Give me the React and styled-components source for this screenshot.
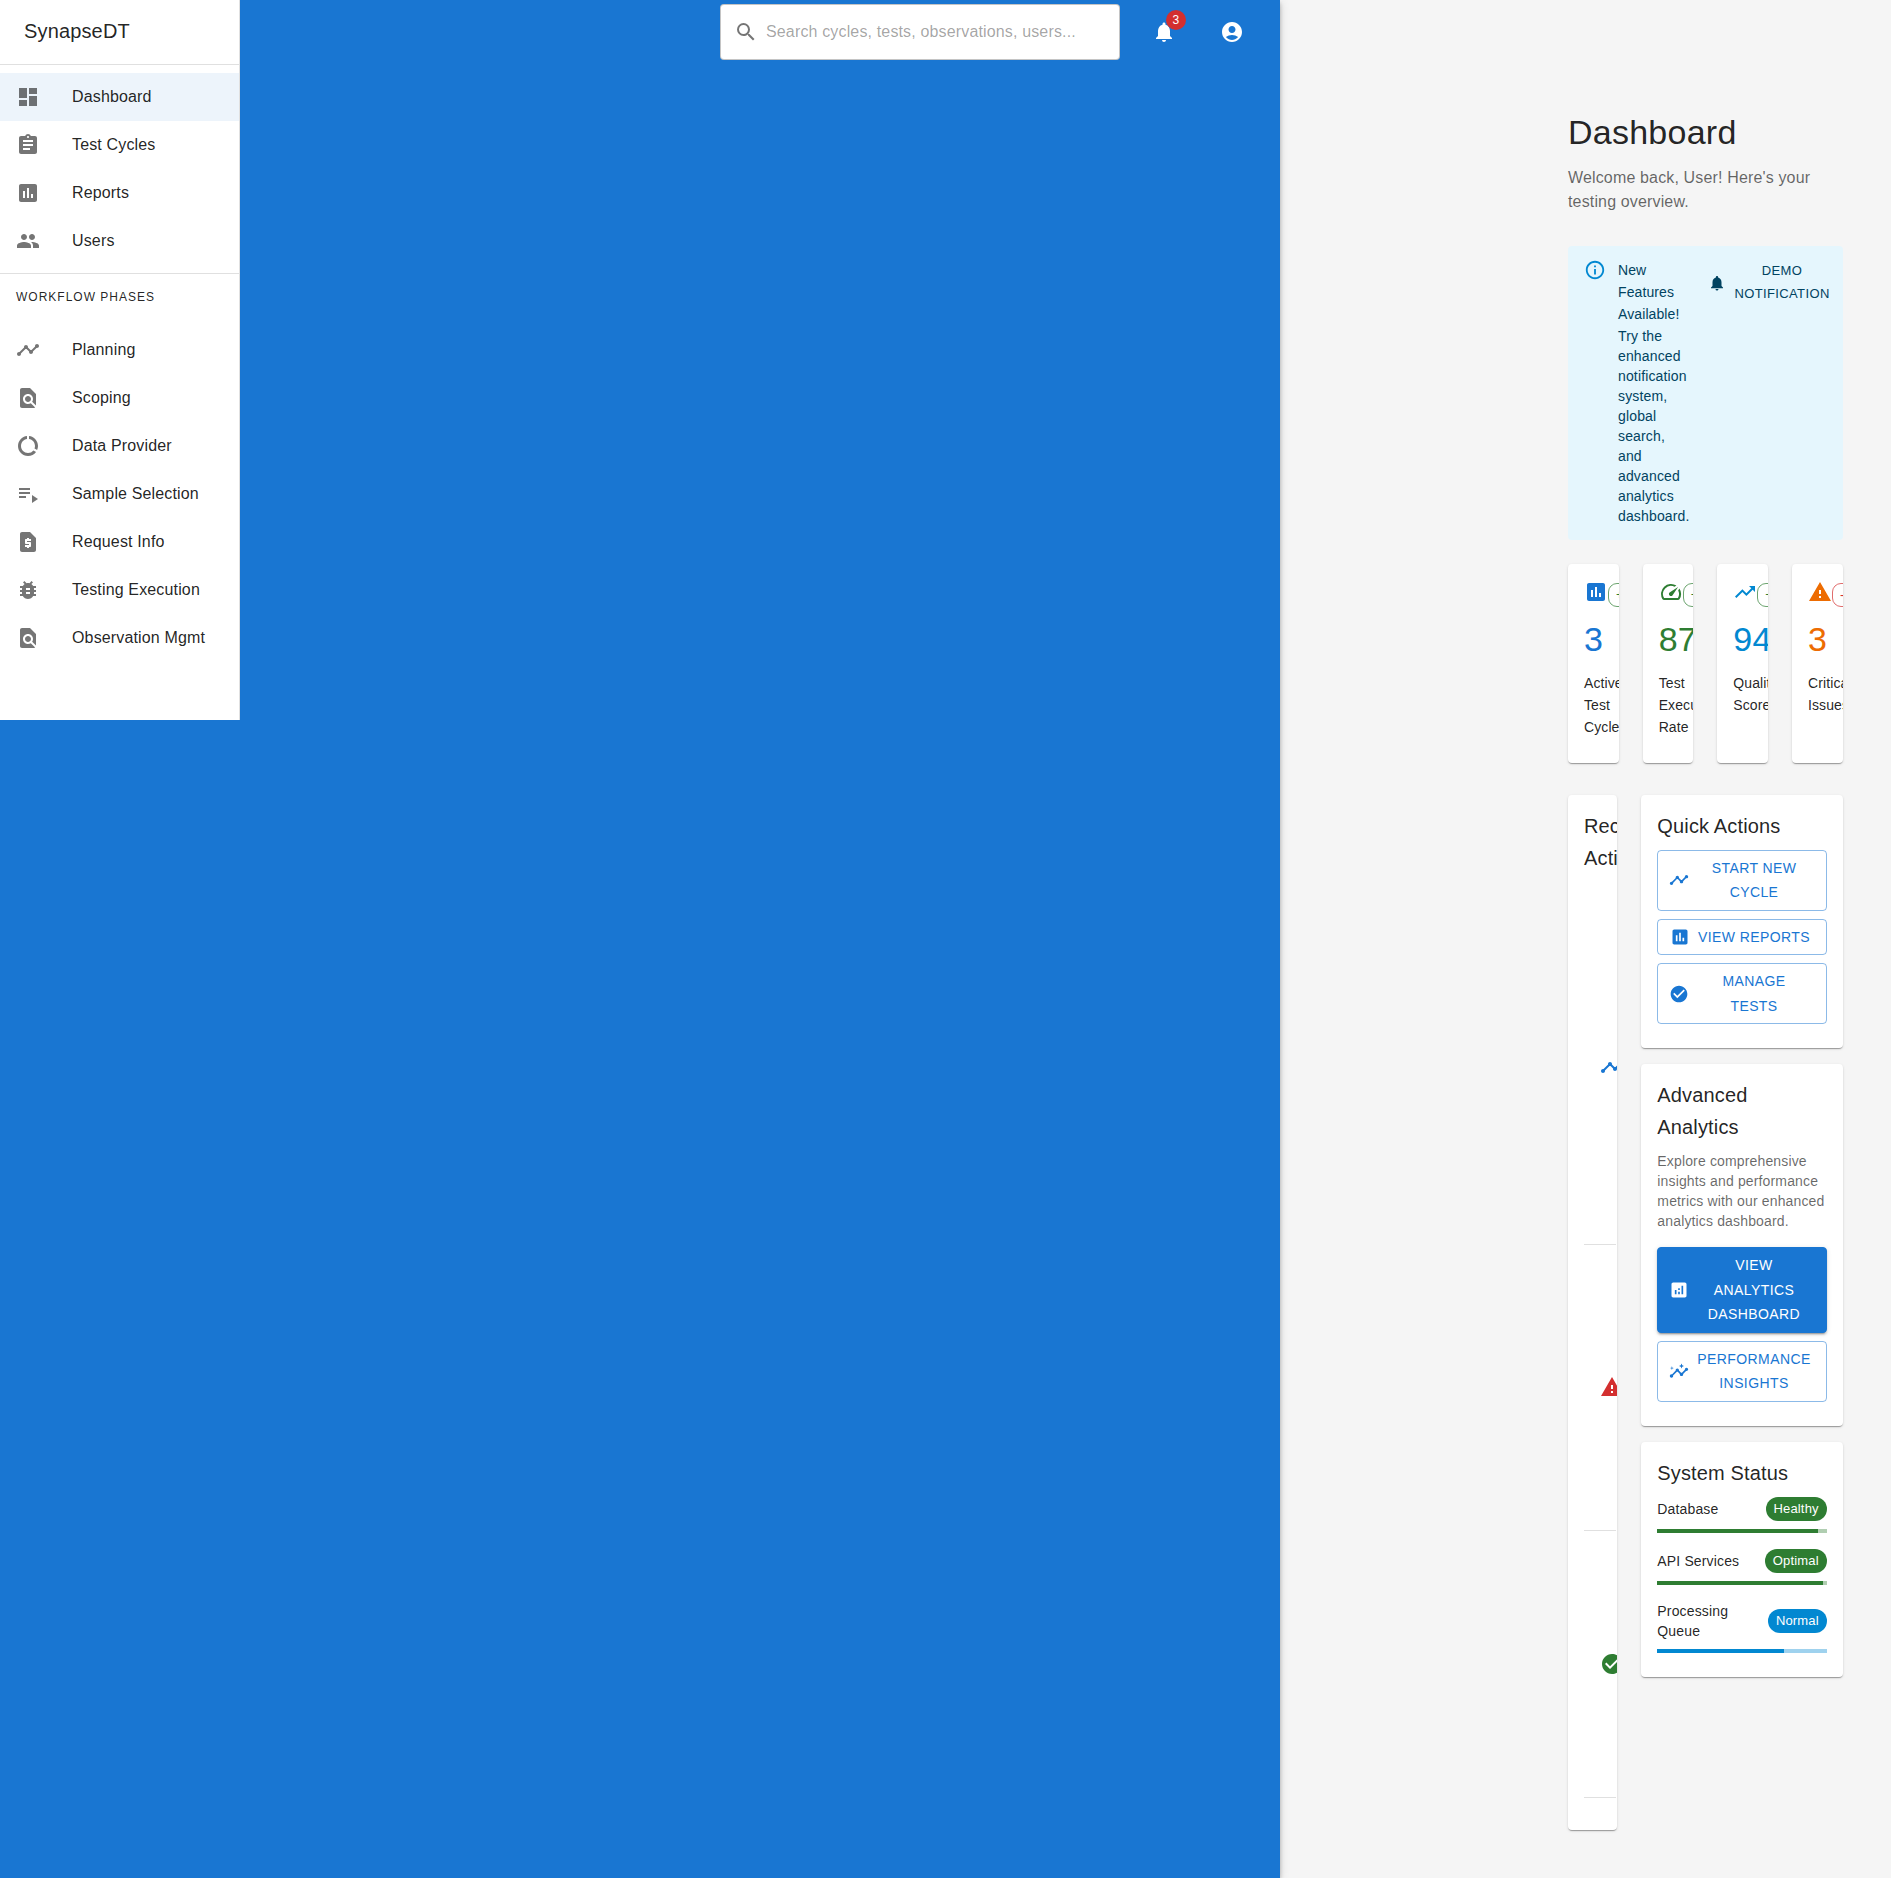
import React from "react";
import styled, { createGlobalStyle } from "styled-components";
import {
  MdDashboard, MdAssignment, MdAssessment, MdPeople, MdTimeline, MdFindInPage,
  MdDataUsage, MdPlaylistPlay, MdRequestPage, MdBugReport, MdSearch,
  MdNotifications, MdAccountCircle, MdInfoOutline, MdSpeed, MdTrendingUp,
  MdWarning, MdCheckCircle, MdAnalytics, MdInsights,
} from "react-icons/md";

const color = {
  primary: "#1976d2",
  success: "#2e7d32",
  info: "#0288d1",
  warning: "#ed6c02",
  error: "#d32f2f",
  text: "rgba(0, 0, 0, 0.87)",
  muted: "rgba(0, 0, 0, 0.6)",
  icon: "rgba(0, 0, 0, 0.54)",
  divider: "rgba(0, 0, 0, 0.12)",
};

const GlobalStyle = createGlobalStyle`
  *, *::before, *::after { box-sizing: border-box; }
  body {
    margin: 0;
    background: #f5f5f5;
    color: ${color.text};
    font: 400 16px/1.5 "Liberation Sans", Arial, sans-serif;
    letter-spacing: 0.00938em;
    -webkit-font-smoothing: antialiased;
  }
  svg { display: block; flex-shrink: 0; }
`;

const Shell = styled.div`
  display: flex;
  height: 1878px;
  overflow: hidden;
`;

const AppBar = styled.header`
  position: relative;
  z-index: 1;
  display: flex;
  align-items: flex-start;
  flex: 0 0 1280px;
  background: ${color.primary};
  box-shadow: 0 2px 4px -1px rgba(0, 0, 0, 0.2), 0 4px 5px rgba(0, 0, 0, 0.14),
    0 1px 10px rgba(0, 0, 0, 0.12);
`;

const Drawer = styled.nav`
  width: 240px;
  height: 720px;
  background: #fff;
  border-right: 1px solid ${color.divider};
`;

const Brand = styled.div`
  height: 65px;
  padding: 15px 24px;
  border-bottom: 1px solid ${color.divider};
  font-size: 20px;
  line-height: 32px;
  letter-spacing: 0.0075em;
`;

const NavList = styled.ul`
  list-style: none;
  margin: 0;
  padding: ${(p) => (p.$flush ? "0" : "8px 0")};
  border-bottom: ${(p) => (p.$flush ? "0" : `1px solid ${color.divider}`)};
`;

const NavItem = styled.li`
  display: flex;
  align-items: center;
  gap: 32px;
  height: 48px;
  padding: 0 16px;
  background: ${(p) => (p.$active ? "rgba(25, 118, 210, 0.08)" : "transparent")};
  svg { color: ${color.icon}; }
`;

const NavHeading = styled.div`
  height: 52px;
  padding: 7px 16px;
  font-size: 12px;
  line-height: 32px;
  letter-spacing: 0.08333em;
  text-transform: uppercase;
`;

const Toolbar = styled.div`
  flex: 1;
  display: flex;
  align-items: center;
  justify-content: flex-end;
  gap: 20px;
  height: 64px;
  padding: 0 24px;
  color: #fff;
`;

const SearchField = styled.div`
  display: flex;
  align-items: center;
  gap: 8px;
  width: 400px;
  height: 56px;
  padding: 0 13px;
  background: #fff;
  border: 1px solid rgba(0, 0, 0, 0.23);
  border-radius: 4px;
  color: rgba(0, 0, 0, 0.37);
  svg { color: ${color.icon}; }
`;

const IconButton = styled.div`
  position: relative;
  display: grid;
  place-items: center;
  width: 48px;
  height: 48px;
`;

const Badge = styled.span`
  position: absolute;
  top: 2px;
  right: 2px;
  width: 20px;
  height: 20px;
  border-radius: 10px;
  background: ${color.error};
  font-size: 12px;
  line-height: 20px;
  text-align: center;
`;

const Main = styled.main`
  flex: 1;
  min-width: 0;
  padding: 112px 48.33px 48px 288px;
`;

const PageTitle = styled.h1`
  margin: 0 0 13.9px;
  font-size: 34px;
  font-weight: 400;
  line-height: 40px;
  letter-spacing: 0.00735em;
`;

const Lead = styled.p`
  margin: 0 0 32px;
  color: ${color.muted};
`;

const Alert = styled.section`
  display: flex;
  justify-content: space-between;
  height: 294px;
  padding: 6px 8px 6px 16px;
  margin-bottom: 24px;
  border-radius: 4px;
  background: #e5f6fd;
  color: #014361;
  font-size: 14px;
  line-height: 20px;
  letter-spacing: 0.01071em;
`;

const AlertIcon = styled.div`
  padding: 7px 0;
  margin-right: 12px;
  color: ${color.info};
`;

const AlertMessage = styled.div`
  width: 72px;
  padding: 8px 0;
`;

const AlertTitle = styled.div`
  margin: -1px 0 1px;
  line-height: 22px;
  letter-spacing: 0.00714em;
`;

const AlertAction = styled.div`
  display: flex;
  align-items: center;
  align-self: flex-start;
  gap: 8px;
  margin: 4px 0 0 auto;
  padding: 4px 5px 4px 3px;
  font-size: 13px;
  line-height: 22.75px;
  letter-spacing: 0.02857em;
  text-align: center;
`;

const Card = styled.section`
  padding: 16px 16px 24px;
  overflow: hidden;
  background: #fff;
  border-radius: 4px;
  box-shadow: 0 2px 1px -1px rgba(0, 0, 0, 0.2), 0 1px 1px rgba(0, 0, 0, 0.14),
    0 1px 3px rgba(0, 0, 0, 0.12);
`;

const StatGrid = styled.div`
  display: grid;
  grid-template-columns: repeat(4, minmax(0, 1fr));
  gap: 24px;
  height: 199px;
  margin-bottom: 32px;
`;

const StatTop = styled.div`
  display: flex;
  align-items: flex-start;
  height: 30px;
  margin-bottom: 8px;
  color: ${(p) => p.$color};
`;

const TrendChip = styled.span`
  flex-shrink: 0;
  margin-top: 3px;
  height: 24px;
  padding: 0 7px;
  border: 1px solid ${(p) => p.$color}b3;
  border-radius: 9px;
  color: ${(p) => p.$color};
  font-size: 13px;
  line-height: 22px;
  letter-spacing: 0.15px;
`;

const StatValue = styled.div`
  margin-bottom: 12px;
  color: ${(p) => p.$color};
  font-size: 34px;
  line-height: 42px;
  letter-spacing: 0.00735em;
`;

const StatLabel = styled.div`
  font-size: 14px;
  line-height: 22px;
  letter-spacing: 0.00714em;
`;

const Columns = styled.div`
  display: grid;
  grid-template-columns: 49.33px minmax(0, 1fr);
  gap: 24px;
  height: 1035px;
`;

const Stack = styled.div`
  display: flex;
  flex-direction: column;
  gap: 16px;
`;

const CardTitle = styled.h2`
  margin: -1px 0 8px;
  font-size: 20px;
  font-weight: 400;
  line-height: 32px;
  letter-spacing: 0.0075em;
`;

const ActivityList = styled.ul`
  list-style: none;
  width: 32px;
  margin: 0;
  padding: 8px 0;
`;

const ActivityItem = styled.li`
  display: flex;
  align-items: center;
  height: ${(p) => p.$height}px;
  padding-left: 16px;
  border-bottom: 1px solid ${color.divider};
  color: ${(p) => p.$color};
`;

const ButtonStack = styled.div`
  display: flex;
  flex-direction: column;
  gap: 8px;
`;

const Button = styled.div`
  display: flex;
  align-items: center;
  justify-content: center;
  gap: 8px;
  padding: 5px 15px 5px 11px;
  border: 1px solid ${(p) => (p.$filled ? color.primary : "rgba(25, 118, 210, 0.5)")};
  border-radius: 4px;
  background: ${(p) => (p.$filled ? color.primary : "transparent")};
  color: ${(p) => (p.$filled ? "#fff" : color.primary)};
  box-shadow: ${(p) => (p.$filled
    ? "0 3px 1px -2px rgba(0,0,0,.2), 0 2px 2px rgba(0,0,0,.14), 0 1px 5px rgba(0,0,0,.12)"
    : "none")};
  font-size: 14px;
  line-height: 24.5px;
  letter-spacing: 0.02857em;
  text-align: center;
  text-transform: uppercase;
`;

const ButtonText = styled.span`
  flex: ${(p) => (p.$wide ? "1" : "0 1 auto")};
`;

const Description = styled.p`
  margin: 0 0 16px;
  color: ${color.muted};
  font-size: 14px;
  line-height: 20px;
  letter-spacing: 0.01071em;
`;

const StatusList = styled.div`
  display: flex;
  flex-direction: column;
  gap: 16px;
`;

const StatusRow = styled.div`
  display: flex;
  align-items: center;
  justify-content: space-between;
  margin-bottom: 8px;
  font-size: 14px;
  line-height: 20px;
  letter-spacing: 0.01071em;
`;

const StatusChip = styled.span`
  height: 24px;
  padding: 0 8px;
  border-radius: 12px;
  background: ${(p) => p.$color};
  color: #fff;
  font-size: 13px;
  line-height: 24px;
  letter-spacing: 0.15px;
`;

const Meter = styled.div`
  height: 4px;
  background: ${(p) => p.$track};
`;

const MeterFill = styled.div`
  height: 4px;
  background: ${(p) => p.$color};
`;

const mainNav = [
  ["Dashboard", MdDashboard],
  ["Test Cycles", MdAssignment],
  ["Reports", MdAssessment],
  ["Users", MdPeople],
];

const phases = [
  ["Planning", MdTimeline],
  ["Scoping", MdFindInPage],
  ["Data Provider", MdDataUsage],
  ["Sample Selection", MdPlaylistPlay],
  ["Request Info", MdRequestPage],
  ["Testing Execution", MdBugReport],
  ["Observation Mgmt", MdFindInPage],
];

const stats = [
  { icon: MdAssessment, tone: color.primary, value: "3", label: "Active Test Cycles", trend: "+12%", trendTone: color.success },
  { icon: MdSpeed, tone: color.success, value: "87%", label: "Test Execution Rate", trend: "+5%", trendTone: color.success },
  { icon: MdTrendingUp, tone: color.info, value: "94%", label: "Quality Score", trend: "+2%", trendTone: color.success },
  { icon: MdWarning, tone: color.warning, value: "3", label: "Critical Issues", trend: "-25%", trendTone: color.error },
];

const activity = [
  { icon: MdTimeline, tone: color.primary, height: 355 },
  { icon: MdWarning, tone: color.error, height: 286 },
  { icon: MdCheckCircle, tone: color.success, height: 267 },
];

const services = [
  { name: "Database", state: "Healthy", tone: color.success, track: "#b0ceb1", value: 95 },
  { name: "API Services", state: "Optimal", tone: color.success, track: "#b0ceb1", value: 98 },
  { name: <>Processing<br />Queue</>, state: "Normal", tone: color.info, track: "#9fd2ee", value: 75 },
];

function ActionButton({ icon: Icon, filled, wide, children }) {
  return (
    <Button $filled={filled}>
      <Icon size={20} />
      <ButtonText $wide={wide}>{children}</ButtonText>
    </Button>
  );
}

export default function App() {
  return (
    <>
      <GlobalStyle />
      <Shell>
        <AppBar>
          <Drawer>
            <Brand>SynapseDT</Brand>
            <NavList>
              {mainNav.map(([label, Icon], i) => (
                <NavItem key={label} $active={i === 0}><Icon size={24} />{label}</NavItem>
              ))}
            </NavList>
            <NavHeading>Workflow Phases</NavHeading>
            <NavList $flush>
              {phases.map(([label, Icon]) => (
                <NavItem key={label}><Icon size={24} />{label}</NavItem>
              ))}
            </NavList>
          </Drawer>
          <Toolbar>
            <SearchField>
              <MdSearch size={24} />
              Search cycles, tests, observations, users...
            </SearchField>
            <IconButton><MdNotifications size={24} /><Badge>3</Badge></IconButton>
            <IconButton><MdAccountCircle size={24} /></IconButton>
          </Toolbar>
        </AppBar>
        <Main>
          <PageTitle>Dashboard</PageTitle>
          <Lead>Welcome back, User! Here's your testing overview.</Lead>
          <Alert>
            <AlertIcon><MdInfoOutline size={22} /></AlertIcon>
            <AlertMessage>
              <AlertTitle>New Features Available!</AlertTitle>
              Try the enhanced notification system, global search, and advanced
              analytics dashboard.
            </AlertMessage>
            <AlertAction>
              <MdNotifications size={18} />
              <span>DEMO<br />NOTIFICATION</span>
            </AlertAction>
          </Alert>
          <StatGrid>
            {stats.map(({ icon: Icon, tone, value, label, trend, trendTone }) => (
              <Card key={label}>
                <StatTop $color={tone}>
                  <Icon size={24} />
                  <TrendChip $color={trendTone}>{trend}</TrendChip>
                </StatTop>
                <StatValue $color={tone}>{value}</StatValue>
                <StatLabel>{label}</StatLabel>
              </Card>
            ))}
          </StatGrid>
          <Columns>
            <Card>
              <CardTitle>Recent Activity</CardTitle>
              <ActivityList>
                {activity.map(({ icon: Icon, tone, height }) => (
                  <ActivityItem key={height} $color={tone} $height={height}><Icon size={24} /></ActivityItem>
                ))}
              </ActivityList>
            </Card>
            <Stack>
              <Card>
                <CardTitle>Quick Actions</CardTitle>
                <ButtonStack>
                  <ActionButton icon={MdTimeline} wide>Start New<br />Cycle</ActionButton>
                  <ActionButton icon={MdAssessment}>View Reports</ActionButton>
                  <ActionButton icon={MdCheckCircle} wide>Manage<br />Tests</ActionButton>
                </ButtonStack>
              </Card>
              <Card>
                <CardTitle>Advanced Analytics</CardTitle>
                <Description>
                  Explore comprehensive insights and performance metrics with our enhanced
                  analytics dashboard.
                </Description>
                <ButtonStack>
                  <ActionButton icon={MdAnalytics} filled wide>View<br />Analytics<br />Dashboard</ActionButton>
                  <ActionButton icon={MdInsights} wide>Performance<br />Insights</ActionButton>
                </ButtonStack>
              </Card>
              <Card>
                <CardTitle>System Status</CardTitle>
                <StatusList>
                  {services.map(({ name, state, tone, track, value }) => (
                    <div key={state}>
                      <StatusRow><span>{name}</span><StatusChip $color={tone}>{state}</StatusChip></StatusRow>
                      <Meter $track={track}><MeterFill $color={tone} style={{ width: `${value}%` }} /></Meter>
                    </div>
                  ))}
                </StatusList>
              </Card>
            </Stack>
          </Columns>
        </Main>
      </Shell>
    </>
  );
}
